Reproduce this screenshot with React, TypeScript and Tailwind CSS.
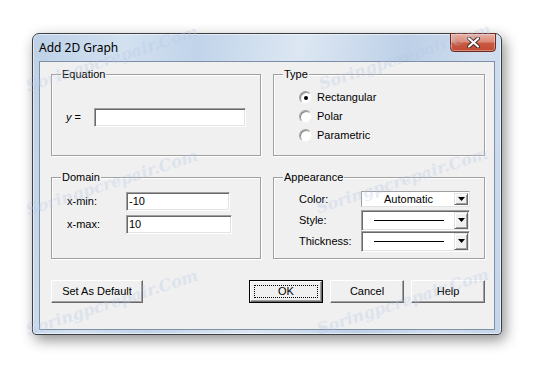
import React from "react";

const TextBox = ({ value = "", className = "" }: { value?: string; className?: string }) => (
  <div
    className={`h-[19px] bg-white border border-t-[#a0a0a0] border-l-[#a0a0a0] border-r-white border-b-white shadow-[inset_1px_1px_0_#696969,inset_-1px_-1px_0_#e3e3e3] pl-[2px] text-[11px] leading-[17px] ${className}`}
  >
    {value}
  </div>
);

const Arrow = () => (
  <svg width="7" height="4" viewBox="0 0 7 4">
    <polygon points="0,0 7,0 3.5,4" fill="#000" />
  </svg>
);

const DropButton = () => (
  <div className="w-[14px] self-stretch flex items-center justify-center bg-[#f0f0f0] border border-t-[#e3e3e3] border-l-[#e3e3e3] border-r-[#696969] border-b-[#696969] shadow-[inset_1px_1px_0_#fff,inset_-1px_-1px_0_#a0a0a0]">
    <Arrow />
  </div>
);

const LineCombo = () => (
  <div className="h-[21px] w-[109px] flex bg-white border border-t-[#a0a0a0] border-l-[#a0a0a0] border-r-white border-b-white shadow-[inset_1px_1px_0_#696969,inset_-1px_-1px_0_#e3e3e3] p-[1px]">
    <div className="flex-1 flex items-center justify-center">
      <div className="w-[70px] h-px bg-black" />
    </div>
    <DropButton />
  </div>
);

const Radio = ({ checked = false, label }: { checked?: boolean; label: string }) => (
  <div className="h-[19px] flex items-center gap-[5px]">
    <div className="w-[13px] h-[13px] rounded-full bg-white border border-t-[#a0a0a0] border-l-[#a0a0a0] border-r-[#f4f4f4] border-b-[#f4f4f4] shadow-[inset_1px_1px_0_#8a8a8a] flex items-center justify-center">
      {checked && <div className="w-[4px] h-[4px] rounded-full bg-black" />}
    </div>
    <span>{label}</span>
  </div>
);

const GroupBox = ({ title, children, className = "" }: { title: string; children: React.ReactNode; className?: string }) => (
  <div
    className={`relative h-[82px] border border-[#a0a0a0] shadow-[inset_1px_1px_0_#fff,1px_1px_0_#fff] ${className}`}
  >
    <span className="absolute -top-[8px] left-[9px] bg-[#f0f0f0] px-px leading-[14px]">{title}</span>
    {children}
  </div>
);

const Button = ({ label, className = "", isDefault = false }: { label: string; className?: string; isDefault?: boolean }) => {
  if (isDefault) {
    return (
      <div className={`h-[23px] border border-black ${className}`}>
        <div className="h-full p-[3px] bg-[#f0f0f0] border border-t-white border-l-white border-r-[#696969] border-b-[#696969] shadow-[inset_-1px_-1px_0_#a0a0a0]">
          <div className="h-full border border-dotted border-black flex items-center justify-center">{label}</div>
        </div>
      </div>
    );
  }
  return (
    <div
      className={`h-[23px] flex items-center justify-center bg-[#f0f0f0] border border-t-white border-l-white border-r-[#696969] border-b-[#696969] shadow-[inset_-1px_-1px_0_#a0a0a0] ${className}`}
    >
      {label}
    </div>
  );
};

// faint watermark copies lying over the dialog
const marks = [
  "left-[112px] top-[59px]",
  "left-[405px] top-[57px]",
  "left-[112px] top-[183px]",
  "left-[402px] top-[181px]",
  "left-[112px] top-[303px]",
  "left-[403px] top-[302px]",
];

export default function App() {
  return (
    <div className="relative w-[536px] h-[369px] bg-white overflow-hidden text-[11px] text-black font-['Liberation_Sans',Arial,sans-serif]">
      <div className="pl-[32px] pt-[33px]">
        <div className="w-[470px] h-[302px] flex flex-col px-[6px] pb-[4px] rounded-t-[7px] rounded-b-[4px] border border-[#3c3f44] bg-[linear-gradient(100deg,#bcd0e7_0%,#d3e1f0_18%,#c1d4ea_32%,#dde7f3_52%,#bdd0e7_72%,#d0deef_88%,#c3d5ea_100%)] shadow-[inset_0_0_0_1px_rgba(255,255,255,0.55),3px_5px_14px_rgba(0,0,0,0.45)]">
          <div className="h-[27px] flex items-start justify-between">
            <span className="mt-[5px] text-[12px] font-['Noto_Sans',sans-serif] text-black">Add 2D Graph</span>
            <div className="-mt-px -mr-px w-[46px] h-[19px] rounded-b-[4px] border border-[#6b2a22] bg-[linear-gradient(180deg,#eab0a2_0%,#dc8b78_45%,#c85a42_55%,#c34a33_100%)] shadow-[inset_0_0_0_1px_rgba(255,255,255,0.35)] flex items-center justify-center">
              <svg width="13" height="11" viewBox="0 0 13 11">
                <path d="M2 1.5 L11 9.5 M11 1.5 L2 9.5" stroke="#4a2520" strokeWidth="4" strokeLinecap="round" />
                <path d="M2 1.5 L11 9.5 M11 1.5 L2 9.5" stroke="#fff" strokeWidth="2.2" strokeLinecap="round" />
              </svg>
            </div>
          </div>
          <div className="flex-1 bg-[#f0f0f0] border border-[#7d8fa5] pl-[11px] pt-[12px]">
            <div className="w-[434px]">
              <div className="grid grid-cols-[210px_212px] gap-x-[12px] gap-y-[21px]">
                <GroupBox title="Equation">
                  <div className="pt-[33px] pl-[14px] flex items-center">
                    <span className="w-[28px]">
                      <i>y</i> =
                    </span>
                    <TextBox className="w-[152px]" />
                  </div>
                </GroupBox>
                <GroupBox title="Type">
                  <div className="pt-[13px] pl-[25px] flex flex-col">
                    <Radio checked label="Rectangular" />
                    <Radio label="Polar" />
                    <Radio label="Parametric" />
                  </div>
                </GroupBox>
                <GroupBox title="Domain">
                  <div className="pt-[14px] pl-[15px] flex flex-col gap-[4px]">
                    <div className="flex items-center">
                      <span className="w-[59px]">x-min:</span>
                      <TextBox value="-10" className="w-[104px]" />
                    </div>
                    <div className="flex items-center">
                      <span className="w-[59px]">x-max:</span>
                      <TextBox value="10" className="w-[106px]" />
                    </div>
                  </div>
                </GroupBox>
                <GroupBox title="Appearance">
                  <div className="pt-[13px] pl-[25px] flex flex-col">
                    <div className="flex items-center">
                      <span className="w-[62px]">Color:</span>
                      <div className="h-[16px] w-[109px] flex bg-white border border-[#a0a0a0] border-b-[#e3e3e3] border-r-[#e3e3e3] p-px">
                        <div className="flex-1 flex items-center justify-center leading-none">Automatic</div>
                        <DropButton />
                      </div>
                    </div>
                    <div className="flex items-center mt-[2px]">
                      <span className="w-[62px]">Style:</span>
                      <LineCombo />
                    </div>
                    <div className="flex items-center">
                      <span className="w-[62px]">Thickness:</span>
                      <LineCombo />
                    </div>
                  </div>
                </GroupBox>
              </div>
              <div className="mt-[21px] flex items-center">
                <Button label="Set As Default" className="w-[92px]" />
                <div className="ml-auto flex gap-[7px]">
                  <Button label="OK" isDefault className="w-[74px]" />
                  <Button label="Cancel" className="w-[74px]" />
                  <Button label="Help" className="w-[74px]" />
                </div>
              </div>
            </div>
          </div>
        </div>
      </div>
      {marks.map((pos) => (
        <span
          key={pos}
          className={`pointer-events-none absolute ${pos} -translate-x-1/2 -translate-y-1/2 -rotate-[18deg] whitespace-nowrap text-[16px] italic font-bold font-['DejaVu_Serif',serif] text-[#b4c6e6] opacity-30`}
        >
          Soringpcrepair.Com
        </span>
      ))}
    </div>
  );
}
